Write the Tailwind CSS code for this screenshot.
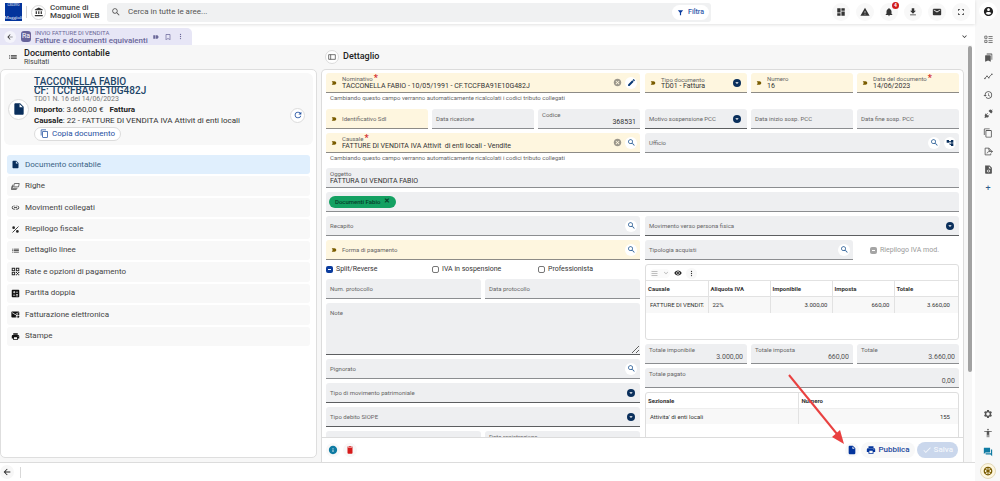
<!DOCTYPE html>
<html lang="it">
<head>
<meta charset="utf-8">
<meta name="viewport" content="width=device-width, initial-scale=1">
<title>Fatture e documenti equivalenti</title>
<script src="https://cdn.jsdelivr.net/npm/@tailwindcss/browser@4"></script>
</head>
<body class="bg-white font-['Roboto',sans-serif] text-[#333]">
<svg class="hidden" aria-hidden="true">
  <symbol id="search" viewBox="0 0 24 24"><path d="M15.5 14h-.79l-.28-.27C15.41 12.59 16 11.11 16 9.5 16 5.91 13.09 3 9.5 3S3 5.91 3 9.5 5.91 16 9.5 16c1.61 0 3.09-.59 4.23-1.57l.27.28v.79l5 4.99L20.49 19l-4.99-5zm-6 0C7.01 14 5 11.99 5 9.5S7.01 5 9.5 5 14 7.01 14 9.5 11.99 14 9.5 14z"/></symbol>
  <symbol id="bank" viewBox="0 0 24 24"><path d="M4 10v7h3v-7H4zm6 0v7h3v-7h-3zM2 22h19v-3H2v3zm14-12v7h3v-7h-3zm-4.5-9L2 6v2h19V6l-9.5-5z"/></symbol>
  <symbol id="dash" viewBox="0 0 24 24"><path d="M3 13h8V3H3v10zm0 8h8v-6H3v6zm10 0h8V11h-8v10zm0-18v6h8V3h-8z"/></symbol>
  <symbol id="warn" viewBox="0 0 24 24"><path d="M1 21h22L12 2 1 21zm12-3h-2v-2h2v2zm0-4h-2v-4h2v4z"/></symbol>
  <symbol id="bell" viewBox="0 0 24 24"><path d="M12 22c1.1 0 2-.9 2-2h-4c0 1.1.9 2 2 2zm6-6v-5c0-3.07-1.63-5.64-4.5-6.32V4c0-.83-.67-1.5-1.5-1.5s-1.5.67-1.5 1.5v.68C7.64 5.36 6 7.92 6 11v5l-2 2v1h16v-1l-2-2z"/></symbol>
  <symbol id="down" viewBox="0 0 24 24"><path d="M19 9h-4V3H9v6H5l7 7 7-7zM5 18v2h14v-2H5z"/></symbol>
  <symbol id="mail" viewBox="0 0 24 24"><path d="M20 4H4c-1.1 0-2 .9-2 2v12c0 1.1.9 2 2 2h16c1.1 0 2-.9 2-2V6c0-1.1-.9-2-2-2zm0 4l-8 5-8-5V6l8 5 8-5v2z"/></symbol>
  <symbol id="full" viewBox="0 0 24 24"><path d="M5 15H3v6h6v-2H5v-4zM3 9h2V5h4V3H3v6zm16 10h-4v2h6v-6h-2v4zM15 3v2h4v4h2V3h-6z"/></symbol>
  <symbol id="user" viewBox="0 0 24 24"><path d="M12 2C6.48 2 2 6.48 2 12s4.48 10 10 10 10-4.48 10-10S17.52 2 12 2zm0 3c1.66 0 3 1.34 3 3s-1.34 3-3 3-3-1.34-3-3 1.34-3 3-3zm0 14.2c-2.5 0-4.71-1.28-6-3.22.03-1.99 4-3.08 6-3.08 1.99 0 5.97 1.09 6 3.08-1.29 1.94-3.5 3.22-6 3.22z"/></symbol>
  <symbol id="back" viewBox="0 0 24 24"><path d="M20 11H7.83l5.59-5.59L12 4l-8 8 8 8 1.41-1.41L7.83 13H20v-2z"/></symbol>
  <symbol id="chev" viewBox="0 0 24 24"><path d="M16.59 8.59L12 13.17 7.41 8.59 6 10l6 6 6-6z"/></symbol>
  <symbol id="bookmark" viewBox="0 0 24 24"><path d="M17 3H7c-1.1 0-2 .9-2 2v16l7-3 7 3V5c0-1.1-.9-2-2-2zm0 15l-5-2.18L7 18V5h10v13z"/></symbol>
  <symbol id="more" viewBox="0 0 24 24"><circle cx="12" cy="5" r="2.2"/><circle cx="12" cy="12" r="2.2"/><circle cx="12" cy="19" r="2.2"/></symbol>
  <symbol id="list" viewBox="0 0 24 24"><path d="M3 13h2v-2H3v2zm0 4h2v-2H3v2zm0-8h2V7H3v2zm4 4h14v-2H7v2zm0 4h14v-2H7v2zM7 7v2h14V7H7z"/></symbol>
  <symbol id="lines" viewBox="0 0 24 24"><path d="M4 6h16v2H4zM4 11h16v2H4zM4 16h16v2H4z"/></symbol>
  <symbol id="file" viewBox="0 0 24 24"><path d="M6 2c-1.1 0-1.99.9-1.99 2L4 20c0 1.1.89 2 1.99 2H18c1.1 0 2-.9 2-2V8l-6-6H6zm7 7V3.5L18.5 9H13z"/></symbol>
  <symbol id="refresh" viewBox="0 0 24 24"><path d="M17.65 6.35C16.2 4.9 14.21 4 12 4c-4.42 0-7.99 3.58-7.99 8s3.57 8 7.99 8c3.73 0 6.84-2.55 7.73-6h-2.08c-.82 2.33-3.04 4-5.65 4-3.31 0-6-2.69-6-6s2.69-6 6-6c1.66 0 3.14.69 4.22 1.78L13 11h7V4l-2.35 2.35z"/></symbol>
  <symbol id="copy" viewBox="0 0 24 24"><path d="M16 1H4c-1.1 0-2 .9-2 2v14h2V3h12V1zm3 4H8c-1.1 0-2 .9-2 2v14c0 1.1.9 2 2 2h11c1.1 0 2-.9 2-2V7c0-1.1-.9-2-2-2zm0 16H8V7h11v14z"/></symbol>
  <symbol id="link" viewBox="0 0 24 24"><path d="M3.9 12c0-1.71 1.39-3.1 3.1-3.1h4V7H7c-2.76 0-5 2.24-5 5s2.24 5 5 5h4v-1.9H7c-1.71 0-3.1-1.39-3.1-3.1zM8 13h8v-2H8v2zm9-6h-4v1.9h4c1.71 0 3.1 1.39 3.1 3.1s-1.39 3.1-3.1 3.1h-4V17h4c2.76 0 5-2.24 5-5s-2.24-5-5-5z"/></symbol>
  <symbol id="print" viewBox="0 0 24 24"><path d="M19 8H5c-1.66 0-3 1.34-3 3v6h4v4h12v-4h4v-6c0-1.66-1.34-3-3-3zm-3 11H8v-5h8v5zm3-7c-.55 0-1-.45-1-1s.45-1 1-1 1 .45 1 1-.45 1-1 1zm-1-9H6v4h12V3z"/></symbol>
  <symbol id="edit" viewBox="0 0 24 24"><path d="M3 17.25V21h3.75L17.81 9.94l-3.75-3.75L3 17.25zM20.71 7.04c.39-.39.39-1.02 0-1.41l-2.34-2.34c-.39-.39-1.02-.39-1.41 0l-1.83 1.83 3.75 3.75 1.83-1.83z"/></symbol>
  <symbol id="cancel" viewBox="0 0 24 24"><path d="M12 2C6.47 2 2 6.47 2 12s4.47 10 10 10 10-4.47 10-10S17.53 2 12 2zm5 13.59L15.59 17 12 13.41 8.41 17 7 15.59 10.59 12 7 8.41 8.41 7 12 10.59 15.59 7 17 8.41 13.41 12 17 15.59z"/></symbol>
  <symbol id="tree" viewBox="0 0 24 24"><path d="M22 11V3h-7v3H9V3H2v8h7V8h2v10h4v3h7v-8h-7v3h-2V8h2v3z"/></symbol>
  <symbol id="eye" viewBox="0 0 24 24"><path d="M12 4.5C7 4.5 2.73 7.61 1 12c1.73 4.39 6 7.5 11 7.5s9.27-3.11 11-7.5c-1.73-4.39-6-7.5-11-7.5zM12 17c-2.76 0-5-2.24-5-5s2.24-5 5-5 5 2.24 5 5-2.24 5-5 5zm0-8c-1.66 0-3 1.34-3 3s1.34 3 3 3 3-1.34 3-3-1.34-3-3-3z"/></symbol>
  <symbol id="trash" viewBox="0 0 24 24"><path d="M6 19c0 1.1.9 2 2 2h8c1.1 0 2-.9 2-2V7H6v12zM19 4h-3.5l-1-1h-5l-1 1H5v2h14V4z"/></symbol>
  <symbol id="info" viewBox="0 0 24 24"><path d="M12 2C6.48 2 2 6.48 2 12s4.48 10 10 10 10-4.48 10-10S17.52 2 12 2zm1 15h-2v-6h2v6zm0-8h-2V7h2v2z"/></symbol>
  <symbol id="check" viewBox="0 0 24 24"><path d="M9 16.17L4.83 12l-1.42 1.41L9 19 21 7l-1.41-1.41z"/></symbol>
  <symbol id="gear" viewBox="0 0 24 24"><path d="M19.14 12.94c.04-.3.06-.61.06-.94s-.02-.64-.07-.94l2.03-1.58c.18-.14.23-.41.12-.61l-1.92-3.32c-.12-.22-.37-.29-.59-.22l-2.39.96c-.5-.38-1.03-.7-1.62-.94l-.36-2.54c-.04-.24-.24-.41-.48-.41h-3.84c-.24 0-.43.17-.47.41l-.36 2.54c-.59.24-1.13.57-1.62.94l-2.39-.96c-.22-.08-.47 0-.59.22L2.74 8.87c-.12.21-.08.47.12.61l2.03 1.58c-.05.3-.09.63-.09.94s.02.64.07.94l-2.03 1.58c-.18.14-.23.41-.12.61l1.92 3.32c.12.22.37.29.59.22l2.39-.96c.5.38 1.03.7 1.62.94l.36 2.54c.05.24.24.41.48.41h3.84c.24 0 .44-.17.47-.41l.36-2.54c.59-.24 1.13-.56 1.62-.94l2.39.96c.22.08.47 0 .59-.22l1.92-3.32c.12-.22.07-.47-.12-.61l-2.01-1.58zM12 16c-2.2 0-4-1.8-4-4s1.800-4 4-4 4 1.800 4 4-1.800 4-4 4z"/></symbol>
  <symbol id="person" viewBox="0 0 24 24"><path d="M12 2c1.1 0 2 .9 2 2s-.9 2-2 2-2-.9-2-2 .9-2 2-2zm9 7h-6v13h-2v-6h-2v6H9V9H3V7h18v2z"/></symbol>
  <symbol id="forum" viewBox="0 0 24 24"><path d="M21 6h-2v9H6v2c0 .55.45 1 1 1h11l4 4V7c0-.55-.45-1-1-1zm-4 6V3c0-.55-.45-1-1-1H3c-.55 0-1 .45-1 1v14l4-4h10c.55 0 1-.45 1-1z"/></symbol>
  <symbol id="funnel" viewBox="0 0 24 24"><path d="M3 4h18l-7 9v8h-4v-8z"/></symbol>
  <symbol id="tag" viewBox="0 0 24 24"><path d="M3 5h11c4 0 7 3 7 7s-3 7-7 7H3l4-7z"/></symbol>
  <symbol id="label" viewBox="0 0 24 24"><path d="M1 5h8v14H1zM11 5h7l5 7-5 7h-7z"/></symbol>
  <symbol id="drop" viewBox="0 0 24 24"><circle cx="12" cy="12" r="12"/><path fill="#fff" d="M7 10h10l-5 5z"/></symbol>
  <symbol id="stack" viewBox="0 0 24 24"><path fill="none" stroke="currentColor" stroke-width="2" d="M9 4h13l-2 9H7zM5 7l-2 10h14M3 10L1 20h14"/></symbol>
  <symbol id="percent" viewBox="0 0 24 24"><path fill="none" stroke="currentColor" stroke-width="2.600" d="M4 20L20 4"/><circle cx="7" cy="7" r="3.500"/><circle cx="17" cy="17" r="3.500"/></symbol>
  <symbol id="qr" viewBox="0 0 24 24"><path fill-rule="evenodd" d="M2 2h9v9H2zM4.500 4.500v4h4v-4zM13 2h9v9h-9zM15.500 4.500v4h4v-4zM2 13h9v9H2zM4.500 15.500v4h4v-4zM13 13h3v3h-3zM19 13h3v3h-3zM16 16h3v3h-3zM13 19h3v3h-3zM19 19h3v3h-3z"/></symbol>
  <symbol id="calc" viewBox="0 0 24 24"><path fill-rule="evenodd" d="M4 2h16a2 2 0 0 1 2 2v16a2 2 0 0 1-2 2H4a2 2 0 0 1-2-2V4a2 2 0 0 1 2-2zM7.500 5v2H5.500v2h2v2h2V9h2V7h-2V5zM13.500 7v2h5V7zM5.500 15v2h6v-2zM13.500 14v2h5v-2zM13.500 17v2h5v-2z"/></symbol>
  <symbol id="mailout" viewBox="0 0 24 24"><path d="M20 4H3c-1.100 0-2 .9-2 2v12c0 1.100.9 2 2 2h10v-6l6-3v3h3V6c0-1.100-.9-2-2-2zm0 4l-8.500 5L3 8V6l8.500 5L20 6v2z"/><path d="M18 14l5 4-5 4v-3h-4v-2h4z"/></symbol>
  <symbol id="checklist" viewBox="0 0 24 24"><path fill="none" stroke="currentColor" stroke-width="2" d="M2 3h6v6H2zM2 14h6v6H2zM12 4h11M12 9h11M12 15h11M12 20h11"/></symbol>
  <symbol id="books" viewBox="0 0 24 24"><path d="M8 1h12a2 2 0 0 1 2 2v15H20V4H7V2zM4 6h12a2 2 0 0 1 2 2v15l-7-3-8 3V7z"/></symbol>
  <symbol id="chart" viewBox="0 0 24 24"><path fill="none" stroke="currentColor" stroke-width="2.200" d="M2 17l6-6 4 4 9-9"/><circle cx="2.500" cy="17" r="2"/><circle cx="8" cy="11" r="2"/><circle cx="13" cy="15" r="2"/><circle cx="21" cy="6" r="2"/></symbol>
  <symbol id="history" viewBox="0 0 24 24"><path d="M13 3c-4.970 0-9 4.030-9 9H1l3.890 3.890.07.14L9 12H6c0-3.870 3.130-7 7-7s7 3.130 7 7-3.130 7-7 7c-1.930 0-3.680-.79-4.940-2.060l-1.420 1.420C8.270 19.990 10.510 21 13 21c4.970 0 9-4.030 9-9s-4.030-9-9-9zm-1 5v5l4.280 2.540.72-1.210-3.500-2.080V8H12z"/></symbol>
  <symbol id="plug" viewBox="0 0 24 24"><path d="M12 5l7 7 2-2c2-2 2-4 0-6l2-2-1-1-2 2c-2-2-4-2-6 0zM4 11l9 9-2 2c-2 1-4 1-5 0l-3 2-2-2 2-3c-2-2-1-4 1-6z"/><path fill="none" stroke="currentColor" stroke-width="2" d="M7 14l3-3M11 18l3-3"/></symbol>
  <symbol id="export" viewBox="0 0 24 24"><path fill="none" stroke="currentColor" stroke-width="2.200" d="M18 8l-5-5H3v18h15v-4M13 3v6h5M8 17c1-4 4-5 8-5h6M19 9l4 3-4 3"/></symbol>
  <symbol id="filecode" viewBox="0 0 24 24"><path fill-rule="evenodd" d="M6 1h9l6 6v14a2 2 0 0 1-2 2H5a2 2 0 0 1-2-2V3a2 2 0 0 1 3-2zM13 3v6h6zM7 16l4 4 1-1.500L9.500 16l2.500-2.500L11 12zM17 16l-4-4-1 1.500 2.500 2.500-2.500 2.500 1 1.500z"/></symbol>
  <symbol id="wheel" viewBox="0 0 24 24"><circle cx="12" cy="12" r="9" fill="none" stroke="currentColor" stroke-width="3"/><circle cx="12" cy="12" r="3"/><path fill="none" stroke="currentColor" stroke-width="2.500" d="M12 3v18M4 7l16 10M20 7L4 17"/></symbol>
  <symbol id="panel" viewBox="0 0 24 24"><path fill="none" stroke="currentColor" stroke-width="2" d="M2 5h20v14H2zM8 5v14"/></symbol>
</svg>

<div class="flex h-screen overflow-hidden">
  <div class="flex min-w-0 flex-1 flex-col">
    <header class="z-10 flex h-6 shrink-0 items-center bg-white pr-[5px] pl-[5px] shadow-[0_1px_3px_rgba(0,0,0,0.12)]">
      <div class="flex h-[18px] w-[17px] flex-col items-center justify-between overflow-hidden bg-[#03349c] font-['Liberation_Serif',serif] text-white">
        <span class="text-[3px] leading-[5px]">GRUPPO</span>
        <span class="text-[5px] leading-[6px]">Maggioli</span>
      </div>
      <div class="mx-1 h-3 w-px bg-[#d5d5d5]"></div>
      <button aria-label="Ente" class="grid size-[15px] place-items-center rounded-full border border-[#d8d8d8]"><svg class="size-[10px] fill-[#333]"><use href="#bank"/></svg></button>
      <div class="ml-[4px] w-[57px] text-[8px] leading-[8px] font-medium text-[#444]">Comune di<br>Maggioli WEB</div>
      <label class="flex h-[19px] w-[604px] min-w-0 items-center rounded-[3px] bg-[#f0f1f2] pr-[2px] pl-1">
        <svg class="size-[10px] shrink-0 fill-[#555]"><use href="#search"/></svg>
        <input aria-label="Cerca" placeholder="Cerca in tutte le aree..." class="ml-[7px] min-w-0 flex-1 bg-transparent text-[8px] outline-none placeholder:text-[#555]">
        <button class="flex h-[15px] items-center gap-1 rounded-full bg-white px-[5px] text-[7px] font-medium text-[#2f59ab]"><svg class="size-[7px] fill-[#0b3c9e]"><use href="#funnel"/></svg>Filtra</button>
      </label>
      <nav class="ml-auto flex gap-[6px]" aria-label="Strumenti">
        <button aria-label="Dashboard" class="grid size-[18px] place-items-center rounded-full bg-[#f8f8f8]"><svg class="size-[10px] fill-[#333]"><use href="#dash"/></svg></button>
        <button aria-label="Avvisi" class="grid size-[18px] place-items-center rounded-full bg-[#f8f8f8]"><svg class="size-[10px] fill-[#333]"><use href="#warn"/></svg></button>
        <button aria-label="Notifiche" class="relative grid size-[18px] place-items-center rounded-full bg-[#f8f8f8]"><svg class="size-[10px] fill-[#333]"><use href="#bell"/></svg><span class="absolute -top-[1px] -right-[1px] size-[7px] rounded-full bg-[#d01c1c] text-center text-[5px] leading-[7px] font-bold text-white">4</span></button>
        <button aria-label="Download" class="grid size-[18px] place-items-center rounded-full bg-[#f8f8f8]"><svg class="size-[10px] fill-[#333]"><use href="#down"/></svg></button>
        <button aria-label="Posta" class="grid size-[18px] place-items-center rounded-full bg-[#f8f8f8]"><svg class="size-[10px] fill-[#333]"><use href="#mail"/></svg></button>
        <button aria-label="Schermo intero" class="grid size-[18px] place-items-center rounded-full bg-[#f8f8f8]"><svg class="size-[8px] fill-[#444]"><use href="#full"/></svg></button>
      </nav>
    </header>

    <div class="flex h-[21px] shrink-0 items-end justify-between bg-white pr-[6px]">
      <div class="flex h-[17px] w-[192px] items-center rounded-tr-[5px] bg-[#e7e6f6] pl-1 text-[#6b6899]">
        <button aria-label="Indietro" class="grid size-[12px] place-items-center rounded-full bg-[#f4f4fb]"><svg class="size-[8px] fill-[#333]"><use href="#back"/></svg></button>
        <span class="ml-[5px] grid h-[11px] w-[10px] place-items-center rounded-[3px] bg-[#66639a] text-[7px] leading-none text-white">Ra</span>
        <div class="ml-1 min-w-0 flex-1 whitespace-nowrap">
          <div class="text-[6px] leading-[8px]">INVIO FATTURE DI VENDITA</div>
          <div class="text-[8px] leading-[8px] font-medium">Fatture e documenti equivalenti</div>
        </div>
        <div class="flex items-center gap-[5px] pr-2">
          <button aria-label="Etichetta"><svg class="size-[6px] fill-current"><use href="#label"/></svg></button>
          <button aria-label="Segnalibro"><svg class="size-[8px] fill-current"><use href="#bookmark"/></svg></button>
          <button aria-label="Altro"><svg class="size-[7px] fill-current"><use href="#more"/></svg></button>
        </div>
      </div>
      <button aria-label="Espandi" class="mb-1"><svg class="size-[9px] fill-[#333]"><use href="#chev"/></svg></button>
    </div>

    <main class="grid min-h-0 flex-1 grid-cols-[317px_minmax(0,1fr)] bg-white pr-[3px]">
      <section class="flex min-h-0 flex-col bg-[#f7f7f7] pb-1">
        <div class="flex h-6 shrink-0 items-center pl-2">
          <svg class="size-[10px] fill-[#333]"><use href="#list"/></svg>
          <div class="ml-[6px]">
            <h1 class="text-[9px] leading-[10px] font-medium text-[#222]">Documento contabile</h1>
            <p class="text-[7px] leading-[8px] text-[#444]">Risultati</p>
          </div>
        </div>
        <div class="min-h-0 flex-1 rounded-[5px] border border-[#dedede] bg-white p-[3px]">
          <article class="flex h-[72px] items-center rounded-[6px] bg-[#f8f8f8] px-[4px]">
            <div class="grid size-[21px] shrink-0 place-items-center rounded-full border border-[#dcdcdc] bg-white"><svg class="size-[14px] fill-[#0a2f5c]"><use href="#file"/></svg></div>
            <div class="ml-[5px] min-w-0 flex-1">
              <h2 class="text-[10px] leading-[9px] font-medium text-[#1d4568]"><a href="#" class="underline">TACCONELLA FABIO</a><br>CF: TCCFBA91E10G482J</h2>
              <p class="text-[7px] leading-[9px] text-[#777]">TD01 N. 16 del 14/06/2023</p>
              <p class="text-[8px] leading-[11px]"><b class="font-bold text-[#222]">Importo</b>: 3.660,00 € <b class="ml-1 font-bold text-[#222]">Fattura</b></p>
              <p class="text-[8px] leading-[11px]"><b class="font-bold text-[#222]">Causale</b>: 22 - FATTURE DI VENDITA IVA Attivit di enti locali</p>
              <button class="my-px flex h-[14px] items-center gap-[3px] rounded-full border border-[#dcdcdc] bg-white px-[5px] text-[8px] text-[#1f4fa0]"><svg class="size-[9px] fill-current"><use href="#copy"/></svg>Copia documento</button>
            </div>
            <button aria-label="Aggiorna" class="mt-3 mr-1 grid size-[15px] place-items-center rounded-full border border-[#dcdcdc] bg-white"><svg class="size-[10px] fill-[#1f4fa0]"><use href="#refresh"/></svg></button>
          </article>
          <nav class="mt-[10px] grid h-[191px] auto-rows-fr gap-[2px] px-[3px] text-[8px] text-[#444]" aria-label="Sezioni">
            <a href="#" class="flex items-center gap-[5px] rounded-[3px] bg-[#e0effd] pl-1 text-[#3b6385]"><svg class="size-[9px] fill-[#0a2f5c]"><use href="#file"/></svg>Documento contabile</a>
            <a href="#" class="flex items-center gap-[5px] rounded-[3px] bg-[#f8f8f8] pl-1"><svg class="size-[9px] fill-[#222]"><use href="#stack"/></svg>Righe</a>
            <a href="#" class="flex items-center gap-[5px] rounded-[3px] bg-[#f8f8f8] pl-1"><svg class="size-[9px] fill-[#222]"><use href="#link"/></svg>Movimenti collegati</a>
            <a href="#" class="flex items-center gap-[5px] rounded-[3px] bg-[#f8f8f8] pl-1"><svg class="size-[9px] fill-[#222]"><use href="#percent"/></svg>Riepilogo fiscale</a>
            <a href="#" class="flex items-center gap-[5px] rounded-[3px] bg-[#f8f8f8] pl-1"><svg class="size-[9px] fill-[#222]"><use href="#list"/></svg>Dettaglio linee</a>
            <a href="#" class="flex items-center gap-[5px] rounded-[3px] bg-[#f8f8f8] pl-1"><svg class="size-[9px] fill-[#222]"><use href="#qr"/></svg>Rate e opzioni di pagamento</a>
            <a href="#" class="flex items-center gap-[5px] rounded-[3px] bg-[#f8f8f8] pl-1"><svg class="size-[9px] fill-[#111]"><use href="#calc"/></svg>Partita doppia</a>
            <a href="#" class="flex items-center gap-[5px] rounded-[3px] bg-[#f8f8f8] pl-1"><svg class="size-[9px] fill-[#111]"><use href="#mailout"/></svg>Fatturazione elettronica</a>
            <a href="#" class="flex items-center gap-[5px] rounded-[3px] bg-[#f8f8f8] pl-1"><svg class="size-[9px] fill-[#111]"><use href="#print"/></svg>Stampe</a>
          </nav>
        </div>
      </section>

      <section class="flex min-h-0 bg-[#f7f7f7] pl-1">
        <div class="flex min-w-0 flex-1 flex-col">
          <div class="flex h-6 shrink-0 items-center pl-1">
            <button aria-label="Pannello" class="grid size-[14px] place-items-center rounded-full border border-[#dcdcdc] bg-white text-[#333]"><svg class="size-[8px] fill-current"><use href="#panel"/></svg></button>
            <h2 class="ml-[4px] text-[9px] font-medium text-[#222]">Dettaglio</h2>
          </div>
          <form class="relative flex min-h-0 flex-1 flex-col rounded-t-[5px] border-x border-t border-[#dcdcdc] bg-white">
            <div class="flex min-h-0 flex-1 flex-col gap-1 overflow-hidden p-1 pt-[3px] text-[6px] leading-[7px] text-[#666]">
              <div class="grid grid-cols-2 gap-x-[5px] gap-y-1">
                <div>
                  <div class="flex h-5 items-center rounded-t-[3px] border-b border-[#8d8b86] bg-[#fef6df] pr-[3px] pl-[5px]">
                    <svg class="mr-[5px] size-[6px] shrink-0 fill-[#7a5c00]"><use href="#tag"/></svg>
                    <label class="flex min-w-0 flex-1 flex-col"><span>Nominativo<b class="ml-px text-[9px] leading-[5px] text-[#d32f2f]">*</b></span><input class="w-full bg-transparent text-[7px] leading-[7px] text-[#333]" value="TACCONELLA FABIO - 10/05/1991 - CF.TCCFBA91E10G482J"></label>
                    <button type="button" aria-label="Cancella nominativo"><svg class="size-[9px] fill-[#9b978c]"><use href="#cancel"/></svg></button>
                    <button type="button" aria-label="Modifica" class="ml-[3px] grid size-[12px] place-items-center rounded-full bg-white"><svg class="size-[9px] fill-[#0b3a75]"><use href="#edit"/></svg></button>
                  </div>
                  <p class="pb-[3px] pl-1 leading-[9px]">Cambiando questo campo verranno automaticamente ricalcolati i codici tributo collegati</p>
                </div>
                <div class="grid grid-cols-3 items-start gap-1">
                  <div class="flex h-5 items-center rounded-t-[3px] border-b border-[#8d8b86] bg-[#fef6df] pr-1 pl-[5px]">
                    <svg class="mr-[5px] size-[6px] shrink-0 fill-[#7a5c00]"><use href="#tag"/></svg>
                    <label class="flex min-w-0 flex-1 flex-col"><span>Tipo documento</span><select class="w-full appearance-none bg-transparent text-[7px] leading-[7px] text-[#333]"><option>TD01 - Fattura</option></select></label>
                    <svg class="mr-[2px] size-[8px] shrink-0 fill-[#0a2f5c]"><use href="#drop"/></svg>
                  </div>
                  <div class="flex h-5 items-center rounded-t-[3px] border-b border-[#8d8b86] bg-[#fef6df] pr-1 pl-[5px]">
                    <svg class="mr-[5px] size-[6px] shrink-0 fill-[#7a5c00]"><use href="#tag"/></svg>
                    <label class="flex min-w-0 flex-1 flex-col"><span>Numero</span><input class="w-full bg-transparent text-[7px] leading-[7px] text-[#333]" value="16"></label>
                  </div>
                  <div class="flex h-5 items-center rounded-t-[3px] border-b border-[#8d8b86] bg-[#fef6df] pr-1 pl-[5px]">
                    <svg class="mr-[5px] size-[6px] shrink-0 fill-[#7a5c00]"><use href="#tag"/></svg>
                    <label class="flex min-w-0 flex-1 flex-col"><span>Data del documento<b class="ml-px text-[9px] leading-[5px] text-[#d32f2f]">*</b></span><input class="w-full bg-transparent text-[7px] leading-[7px] text-[#333]" value="14/06/2023"></label>
                  </div>
                </div>
                <div class="grid grid-cols-3 gap-1">
                  <label class="flex h-5 items-center rounded-t-[3px] border-b border-[#8d8b86] bg-[#fef6df] pr-1 pl-[5px]"><svg class="mr-[5px] size-[6px] shrink-0 fill-[#7a5c00]"><use href="#tag"/></svg><span>Identificativo SdI</span><input class="min-w-0 flex-1 bg-transparent"></label>
                  <label class="flex h-5 items-center rounded-t-[3px] border-b border-[#8b8d90] bg-[#eeeff1] px-1"><span>Data ricezione</span><input class="min-w-0 flex-1 bg-transparent"></label>
                  <label class="flex h-5 flex-col justify-center rounded-t-[3px] border-b border-[#8b8d90] bg-[#eeeff1] px-1"><span>Codice</span><input class="w-full bg-transparent text-right text-[7px] leading-[7px] text-[#333]" value="368531"></label>
                </div>
                <div class="grid grid-cols-3 gap-1">
                  <label class="flex h-5 items-center rounded-t-[3px] border-b border-[#5c5e60] bg-[#eeeff1] px-1"><span>Motivo sospensione PCC</span><select class="min-w-0 flex-1 appearance-none bg-transparent"><option></option></select><svg class="mr-[2px] size-[8px] shrink-0 fill-[#0a2f5c]"><use href="#drop"/></svg></label>
                  <label class="flex h-5 items-center rounded-t-[3px] border-b border-[#8b8d90] bg-[#eeeff1] px-1"><span>Data inizio sosp. PCC</span><input class="min-w-0 flex-1 bg-transparent"></label>
                  <label class="flex h-5 items-center rounded-t-[3px] border-b border-[#8b8d90] bg-[#eeeff1] px-1"><span>Data fine sosp. PCC</span><input class="min-w-0 flex-1 bg-transparent"></label>
                </div>
                <div>
                  <div class="flex h-5 items-center rounded-t-[3px] border-b border-[#8d8b86] bg-[#fef6df] pr-[3px] pl-[5px]">
                    <svg class="mr-[5px] size-[6px] shrink-0 fill-[#7a5c00]"><use href="#tag"/></svg>
                    <label class="flex min-w-0 flex-1 flex-col"><span>Causale<b class="ml-px text-[9px] leading-[5px] text-[#d32f2f]">*</b></span><input class="w-full bg-transparent text-[7px] leading-[7px] text-[#333]" value="FATTURE DI VENDITA IVA Attivit  di enti locali - Vendite"></label>
                    <button type="button" aria-label="Cancella causale"><svg class="size-[9px] fill-[#9b978c]"><use href="#cancel"/></svg></button>
                    <button type="button" aria-label="Cerca causale" class="ml-[3px] grid size-[12px] place-items-center rounded-full bg-white"><svg class="size-[9px] fill-[#255a94]"><use href="#search"/></svg></button>
                  </div>
                  <p class="pb-[2px] pl-1 leading-[9px]">Cambiando questo campo verranno automaticamente ricalcolati i codici tributo collegati</p>
                </div>
                <div>
                  <div class="flex h-5 items-center gap-1 rounded-t-[3px] border-b border-[#8b8d90] bg-[#eeeff1] pr-[3px] pl-1"><label class="flex min-w-0 flex-1"><span>Ufficio</span><input class="min-w-0 flex-1 bg-transparent"></label>
                    <button type="button" aria-label="Cerca ufficio" class="grid size-[12px] place-items-center rounded-full bg-white"><svg class="size-[9px] fill-[#255a94]"><use href="#search"/></svg></button>
                    <button type="button" aria-label="Albero uffici" class="grid size-[12px] place-items-center rounded-full bg-white"><svg class="size-[8px] fill-[#0a2f5c]"><use href="#tree"/></svg></button>
                  </div>
                </div>
              </div>
              <label class="flex h-5 shrink-0 flex-col justify-center rounded-t-[3px] border-b border-[#8b8d90] bg-[#eeeff1] px-1"><span>Oggetto</span><input class="w-full bg-transparent text-[7px] leading-[7px] text-[#333]" value="FATTURA DI VENDITA FABIO"></label>
              <div class="flex h-5 shrink-0 items-center rounded-t-[3px] border-b border-[#8b8d90] bg-[#eeeff1] px-[3px]">
                <span class="flex h-3 items-center gap-[4px] rounded-full bg-[#14a162] px-[6px] text-[6px] font-medium text-[#06402a]">Documenti Fabio<button type="button" aria-label="Rimuovi Documenti Fabio" class="text-[7px] leading-none font-bold">✕</button></span>
              </div>
              <div class="grid grid-cols-2 gap-x-[5px]">
                <div class="flex flex-col gap-1">
                  <div class="flex h-5 items-center rounded-t-[3px] border-b border-[#8b8d90] bg-[#eeeff1] pr-[3px] pl-1"><label class="flex min-w-0 flex-1"><span>Recapito</span><input class="min-w-0 flex-1 bg-transparent"></label><button type="button" aria-label="Cerca recapito" class="grid size-[12px] place-items-center rounded-full bg-white"><svg class="size-[9px] fill-[#255a94]"><use href="#search"/></svg></button></div>
                  <div class="flex h-5 items-center rounded-t-[3px] border-b border-[#8d8b86] bg-[#fef6df] pr-[3px] pl-[5px]"><svg class="mr-[5px] size-[6px] shrink-0 fill-[#7a5c00]"><use href="#tag"/></svg><label class="flex min-w-0 flex-1"><span>Forma di pagamento</span><input class="min-w-0 flex-1 bg-transparent"></label><button type="button" aria-label="Cerca forma di pagamento" class="grid size-[12px] place-items-center rounded-full bg-white"><svg class="size-[9px] fill-[#255a94]"><use href="#search"/></svg></button></div>
                  <div class="grid h-[11px] grid-cols-3 items-center gap-1 text-[7px] text-[#333]">
                    <label class="flex items-center gap-[3px]"><span class="grid place-items-center"><input type="checkbox" checked class="col-start-1 row-start-1 size-[7px] appearance-none rounded-[2px] bg-[#0b3c9e]"><span class="col-start-1 row-start-1 h-px w-[3px] bg-white"></span></span>Split/Reverse</label>
                    <label class="flex items-center gap-[3px]"><input type="checkbox" class="size-[7px] appearance-none rounded-[2px] border border-[#777] bg-white">IVA in sospensione</label>
                    <label class="flex items-center gap-[3px]"><input type="checkbox" class="size-[7px] appearance-none rounded-[2px] border border-[#777] bg-white">Professionista</label>
                  </div>
                  <div class="grid grid-cols-2 gap-1">
                    <label class="flex h-5 items-center rounded-t-[3px] border-b border-[#8b8d90] bg-[#eeeff1] px-1"><span>Num. protocollo</span><input class="min-w-0 flex-1 bg-transparent"></label>
                    <label class="flex h-5 items-center rounded-t-[3px] border-b border-[#8b8d90] bg-[#eeeff1] px-1"><span>Data protocollo</span><input class="min-w-0 flex-1 bg-transparent"></label>
                  </div>
                  <label class="flex h-[52px] flex-col rounded-t-[3px] border-b border-[#5c5e60] bg-[#eeeff1] pt-[6px] pl-1"><span>Note</span><textarea class="min-h-0 flex-1 resize-y bg-transparent"></textarea></label>
                  <div class="flex h-5 items-center rounded-t-[3px] border-b border-[#8b8d90] bg-[#eeeff1] pr-[3px] pl-1"><label class="flex min-w-0 flex-1"><span>Pignorato</span><input class="min-w-0 flex-1 bg-transparent"></label><button type="button" aria-label="Cerca pignorato" class="grid size-[12px] place-items-center rounded-full bg-white"><svg class="size-[9px] fill-[#255a94]"><use href="#search"/></svg></button></div>
                  <label class="flex h-5 items-center rounded-t-[3px] border-b border-[#5c5e60] bg-[#eeeff1] pr-[3px] pl-1"><span>Tipo di movimento patrimoniale</span><select class="min-w-0 flex-1 appearance-none bg-transparent"><option></option></select><svg class="mr-[2px] size-[8px] shrink-0 fill-[#0a2f5c]"><use href="#drop"/></svg></label>
                  <label class="flex h-5 items-center rounded-t-[3px] border-b border-[#5c5e60] bg-[#eeeff1] pr-[3px] pl-1"><span>Tipo debito SIOPE</span><select class="min-w-0 flex-1 appearance-none bg-transparent"><option></option></select><svg class="mr-[2px] size-[8px] shrink-0 fill-[#0a2f5c]"><use href="#drop"/></svg></label>
                  <div class="grid grid-cols-2 gap-1">
                    <label class="flex h-5 flex-col rounded-t-[3px] bg-[#eeeff1] px-1"><input aria-label="Registrazione" class="min-w-0 bg-transparent"></label>
                    <label class="flex h-5 flex-col rounded-t-[3px] bg-[#eeeff1] px-1 pt-[2px]"><span>Data registrazione</span><input class="min-w-0 bg-transparent"></label>
                  </div>
                </div>
                <div class="flex flex-col gap-1">
                  <label class="flex h-5 items-center rounded-t-[3px] border-b border-[#5c5e60] bg-[#eeeff1] px-1"><span>Movimento verso persona fisica</span><select class="min-w-0 flex-1 appearance-none bg-transparent"><option></option></select><svg class="mr-[1px] size-[8px] shrink-0 fill-[#0a2f5c]"><use href="#drop"/></svg></label>
                  <div class="grid grid-cols-3 gap-1">
                    <div class="col-span-2 flex h-5 items-center rounded-t-[3px] border-b border-[#8b8d90] bg-[#eeeff1] pr-[3px] pl-1"><label class="flex min-w-0 flex-1"><span>Tipologia acquisti</span><input class="min-w-0 flex-1 bg-transparent"></label><button type="button" aria-label="Cerca tipologia" class="grid size-[12px] place-items-center rounded-full bg-white"><svg class="size-[9px] fill-[#255a94]"><use href="#search"/></svg></button></div>
                    <label class="flex items-center gap-[3px] pl-[13px] text-[7px] text-[#999]"><span class="grid place-items-center"><input type="checkbox" checked disabled class="col-start-1 row-start-1 size-[7px] appearance-none rounded-[2px] bg-[#a5a5a5]"><span class="col-start-1 row-start-1 h-px w-[3px] bg-white"></span></span>Riepilogo IVA mod.</label>
                  </div>
                  <div class="h-[76px] overflow-hidden rounded-[3px] border border-[#dedede] bg-white">
                    <div class="flex h-[15px] items-center gap-1 px-1 pt-px">
                      <span class="flex items-center gap-[3px] rounded-full bg-[#fafafa] text-[#aaa]"><button type="button" aria-label="Vista"><svg class="size-[9px] fill-current"><use href="#lines"/></svg></button><button type="button" aria-label="Scegli vista"><svg class="size-[8px] fill-current"><use href="#chev"/></svg></button></span>
                      <button type="button" aria-label="Mostra"><svg class="size-[8px] fill-[#222]"><use href="#eye"/></svg></button>
                      <button type="button" aria-label="Altre azioni" class="grid size-[11px] place-items-center rounded-full bg-[#f8f8f8]"><svg class="size-[7px] fill-[#333]"><use href="#more"/></svg></button>
                    </div>
                    <table class="w-full table-fixed border-collapse text-[#333]">
                      <colgroup><col class="w-[62px]"><col class="w-[62px]"><col class="w-[62px]"><col class="w-[62px]"><col></colgroup>
                      <thead><tr class="h-4 border-y border-[#e2e2e2] text-left"><th class="border-r border-[#e2e2e2] px-[2px] font-bold">Causale</th><th class="border-r border-[#e2e2e2] px-[2px] font-bold">Aliquota IVA</th><th class="border-r border-[#e2e2e2] px-[2px] font-bold">Imponibile</th><th class="border-r border-[#e2e2e2] px-[2px] font-bold">Imposta</th><th class="px-[2px] font-bold">Totale</th></tr></thead>
                      <tbody><tr class="h-4 bg-[#f8f8f8]"><td class="border-r border-[#e2e2e2] px-1 whitespace-nowrap"><div class="overflow-hidden">FATTURE DI VENDITA</div></td><td class="border-r border-[#e2e2e2] px-1">22%</td><td class="border-r border-[#e2e2e2] px-1 text-right">3.000,00</td><td class="border-r border-[#e2e2e2] px-1 text-right">660,00</td><td class="pr-2 text-right">3.660,00</td></tr></tbody>
                    </table>
                  </div>
                  <div class="grid grid-cols-3 gap-1">
                    <label class="flex h-5 flex-col justify-center rounded-t-[3px] border-b border-[#8b8d90] bg-[#eeeff1] px-1"><span>Totale imponibile</span><input class="w-full bg-transparent text-right text-[7px] leading-[7px] text-[#555]" value="3.000,00"></label>
                    <label class="flex h-5 flex-col justify-center rounded-t-[3px] border-b border-[#8b8d90] bg-[#eeeff1] px-1"><span>Totale imposta</span><input class="w-full bg-transparent text-right text-[7px] leading-[7px] text-[#555]" value="660,00"></label>
                    <label class="flex h-5 flex-col justify-center rounded-t-[3px] border-b border-[#8b8d90] bg-[#eeeff1] px-1"><span>Totale</span><input class="w-full bg-transparent text-right text-[7px] leading-[7px] text-[#555]" value="3.660,00"></label>
                  </div>
                  <label class="flex h-5 flex-col justify-center rounded-t-[3px] border-b border-[#8b8d90] bg-[#eeeff1] px-1"><span>Totale pagato</span><input class="w-full bg-transparent text-right text-[7px] leading-[7px] text-[#555]" value="0,00"></label>
                  <div class="h-16 overflow-hidden rounded-[3px] border border-[#dedede] bg-white">
                    <table class="w-full table-fixed border-collapse text-[#333]">
                      <colgroup><col class="w-[49%]"><col></colgroup>
                      <thead><tr class="h-[15px] border-b border-[#eee] text-left"><th class="border-r border-[#e2e2e2] px-[2px] font-bold">Sezionale</th><th class="px-[2px] font-bold">Numero</th></tr></thead>
                      <tbody><tr class="h-4 bg-[#f8f8f8]"><td class="border-r border-[#e2e2e2] px-1">Attivita' di enti locali</td><td class="pr-2 text-right">155</td></tr></tbody>
                    </table>
                  </div>
                </div>
              </div>
            </div>
            <div class="flex h-[25px] shrink-0 items-center gap-[2px] border-t border-[#dcdcdc] bg-white pr-[5px] pl-1">
              <button type="button" aria-label="Informazioni" class="mr-px grid size-[14px] place-items-center rounded-full bg-[#f8f8f8]"><svg class="size-[10px] fill-[#0f7ba3]"><use href="#info"/></svg></button>
              <button type="button" aria-label="Elimina" class="grid size-[14px] place-items-center rounded-full bg-[#f8f8f8]"><svg class="size-[10px] fill-[#d61a1a]"><use href="#trash"/></svg></button>
              <button type="button" aria-label="Documento" class="ml-auto grid size-[14px] place-items-center rounded-full bg-[#f8f8f8]"><svg class="size-[10px] fill-[#03349c]"><use href="#file"/></svg></button>
              <button type="button" class="flex h-4 items-center gap-[2px] rounded-full bg-[#f8f8f8] px-[5px] text-[8px] font-medium text-[#1a479c]"><svg class="size-[10px] fill-[#03349c]"><use href="#print"/></svg>Pubblica</button>
              <button type="button" disabled class="flex h-4 items-center gap-[2px] rounded-full bg-[#cad7ec] px-[5px] text-[8px] font-medium text-[#f3f6fb]"><svg class="size-[10px] fill-current"><use href="#check"/></svg>Salva</button>
            </div>
            <svg class="pointer-events-none absolute right-[118px] bottom-[17px] h-[74px] w-[60px]" viewBox="0 0 60 74" aria-hidden="true"><path d="M4 4L52 63" fill="none" stroke="#e94140" stroke-width="2"/><path d="M59 73L47 66L55 59z" fill="#e94140"/></svg>
          </form>
        </div>
        <div class="w-[8px] shrink-0 pt-px pl-[4px]"><div class="h-[326px] w-1 rounded-full bg-[#a2a2a2]"></div></div>
      </section>
    </main>

    <footer class="flex h-[19px] shrink-0 items-center border-t border-[#dcdcdc] bg-white">
      <button aria-label="Torna indietro" class="grid size-[14px] place-items-center rounded-full bg-[#f7f7f7]"><svg class="size-[10px] fill-[#222]"><use href="#back"/></svg></button>
      <div class="ml-[6px] h-[11px] w-px bg-[#d8d8d8]"></div>
    </footer>
  </div>

  <aside class="flex w-[25px] shrink-0 flex-col items-center justify-between bg-[#f8f8f8] pt-[2px] pl-px text-[#555]">
    <div class="flex flex-col items-center">
      <button aria-label="Profilo" class="grid size-[18px] place-items-center rounded-full bg-white"><svg class="size-[11px] fill-[#222]"><use href="#user"/></svg></button>
      <div class="mt-[10px] grid h-[168px] auto-rows-fr items-center justify-items-center">
        <button aria-label="Elenco"><svg class="size-[9px] fill-current"><use href="#checklist"/></svg></button>
        <button aria-label="Segnalibri"><svg class="size-[9px] fill-current"><use href="#books"/></svg></button>
        <button aria-label="Andamento"><svg class="size-[9px] fill-current"><use href="#chart"/></svg></button>
        <button aria-label="Cronologia"><svg class="size-[10px] fill-current"><use href="#history"/></svg></button>
        <button aria-label="Connessioni"><svg class="size-[9px] fill-current"><use href="#plug"/></svg></button>
        <button aria-label="Copia"><svg class="size-[10px] fill-current"><use href="#copy"/></svg></button>
        <button aria-label="Esporta"><svg class="size-[9px] fill-current"><use href="#export"/></svg></button>
        <button aria-label="File XML"><svg class="size-[9px] fill-current"><use href="#filecode"/></svg></button>
        <button aria-label="Aggiungi" class="text-[9px] leading-none text-[#2c5a8c]">+</button>
      </div>
    </div>
    <div class="flex flex-col items-center gap-[9px] pb-[2px]">
      <button aria-label="Impostazioni"><svg class="size-[10px] fill-current"><use href="#gear"/></svg></button>
      <button aria-label="Accessibilità"><svg class="size-[10px] fill-current"><use href="#person"/></svg></button>
      <button aria-label="Chat"><svg class="size-[10px] fill-[#0f7ba3]"><use href="#forum"/></svg></button>
      <button aria-label="Assistenza" class="-mt-[3px] grid size-4 place-items-center rounded-full border border-[#e3d9b8] bg-[#fdf6df] text-[#7a5c00]"><svg class="size-[10px] fill-current"><use href="#wheel"/></svg></button>
    </div>
  </aside>
</div>
</body>
</html>
